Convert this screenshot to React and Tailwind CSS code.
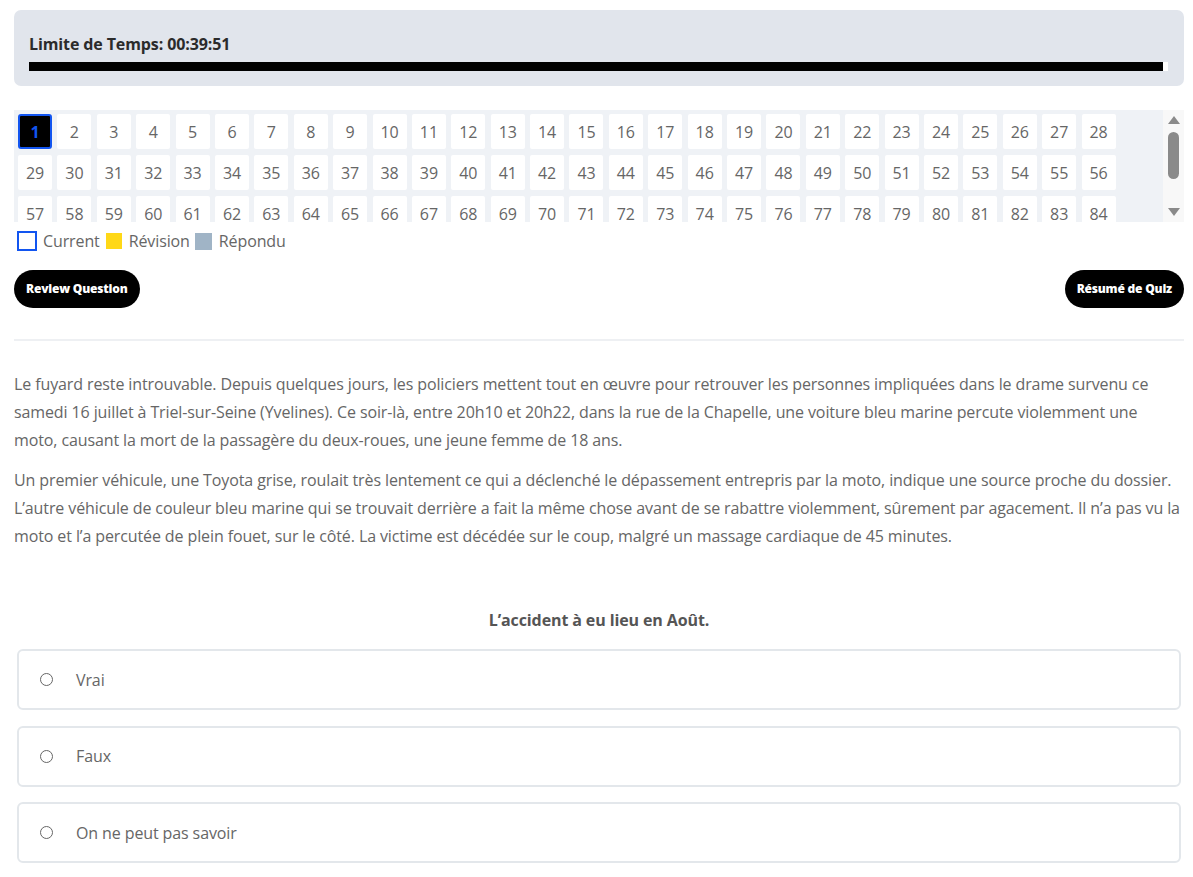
import React from 'react';

const numeros = Array.from({ length: 84 }, (_, i) => i + 1);

const options = ['Vrai', 'Faux', 'On ne peut pas savoir'];

const App = () => {
  return (
    <div className="min-h-screen bg-white pl-[14px] pr-[9px] pt-[10px] font-['Open_Sans',sans-serif] tracking-[-0.11px] text-[#666]">
      {/* Timer */}
      <div className="rounded-[7px] bg-[#e1e5ec] pl-[15px] pr-[16px] pt-[22px] pb-[15px]">
        <p className="text-[16px] leading-[24px] font-bold text-[#2b2b2b]">Limite de Temps: 00:39:51</p>
        <div className="mt-[6px] h-[9px] w-full bg-white">
          <div className="h-full bg-black" style={{ width: '99.55%' }}></div>
        </div>
      </div>

      {/* Question navigator */}
      <div className="mt-[24px] flex h-[112px]">
        <div className="flex-1 overflow-hidden bg-[#eff2f6] pl-[4px] pt-[4px]">
          <div className="grid grid-cols-[repeat(28,34px)] gap-x-[5.4px] gap-y-[6px]">
            {numeros.map((n) => (
              <div
                key={n}
                className={
                  n === 1
                    ? 'flex h-[35px] items-center justify-center rounded-[3px] border-2 border-[#1255f0] bg-black text-[16px] font-bold text-[#1255f0]'
                    : 'flex h-[35px] items-center justify-center rounded-[2px] bg-white text-[16px] text-[#666]'
                }
              >
                {n}
              </div>
            ))}
          </div>
        </div>
        <div className="flex w-[21px] flex-col items-center bg-[#f8f8f8] pt-[6px] pb-[6px]">
          <svg width="12" height="8" viewBox="0 0 12 8"><path d="M6 0 L12 8 L0 8 Z" fill="#8a8a8a" /></svg>
          <div className="mt-[8px] h-[47px] w-[11px] rounded-full bg-[#8a8a8a]"></div>
          <div className="flex-1"></div>
          <svg width="12" height="8" viewBox="0 0 12 8"><path d="M0 0 L12 0 L6 8 Z" fill="#8a8a8a" /></svg>
        </div>
      </div>

      {/* Legend */}
      <div className="mt-[9px] flex items-center text-[16px] leading-[20px] text-[#666]">
        <span className="ml-[3px] h-[20px] w-[20px] border-2 border-[#1255f0]"></span>
        <span className="ml-[6px]">Current</span>
        <span className="ml-[6px] h-[16px] w-[16px] bg-[#ffd817]"></span>
        <span className="ml-[7px]">Révision</span>
        <span className="ml-[5px] h-[17px] w-[17px] bg-[#a0b4c6]"></span>
        <span className="ml-[7px]">Répondu</span>
      </div>

      {/* Buttons */}
      <div className="mt-[19px] flex items-center justify-between">
        <button className="h-[38px] rounded-full bg-black px-[12px] text-[12px] font-extrabold tracking-[-0.2px] text-white">Review Question</button>
        <button className="h-[38px] rounded-full bg-black px-[12px] text-[12px] font-extrabold tracking-[-0.2px] text-white">Résumé de Quiz</button>
      </div>

      <div className="mt-[31px] h-[2px] bg-[#eef0f3]"></div>

      {/* Text */}
      <div className="mt-[29px] text-[16px] leading-[28px] text-[#666]">
        <p>
          Le fuyard reste introuvable. Depuis quelques jours, les policiers mettent tout en œuvre pour retrouver les personnes impliquées dans le drame survenu ce samedi 16 juillet à Triel-sur-Seine (Yvelines). Ce soir-là, entre 20h10 et 20h22, dans la rue de la Chapelle, une voiture bleu marine percute violemment une moto, causant la mort de la passagère du deux-roues, une jeune femme de 18 ans.
        </p>
        <p className="mt-[12px]">
          Un premier véhicule, une Toyota grise, roulait très lentement ce qui a déclenché le dépassement entrepris par la moto, indique une source proche du dossier. L’autre véhicule de couleur bleu marine qui se trouvait derrière a fait la même chose avant de se rabattre violemment, sûrement par agacement. Il n’a pas vu la moto et l’a percutée de plein fouet, sur le côté. La victime est décédée sur le coup, malgré un massage cardiaque de 45 minutes.
        </p>
      </div>

      {/* Question */}
      <p className="mt-[58px] text-center text-[16px] leading-[24px] font-bold text-[#555]">L’accident à eu lieu en Août.</p>

      <div className="mt-[17px] flex flex-col gap-[15.5px] px-[3px] pb-[12px]">
        {options.map((opt) => (
          <label key={opt} className="flex h-[61px] items-center rounded-[6px] border-2 border-[#e3e7eb] bg-white">
            <span className="ml-[21px] h-[13px] w-[13px] rounded-full border border-[#666]"></span>
            <span className="ml-[23px] text-[16px] text-[#666]">{opt}</span>
          </label>
        ))}
      </div>
    </div>
  );
};

export default App;
